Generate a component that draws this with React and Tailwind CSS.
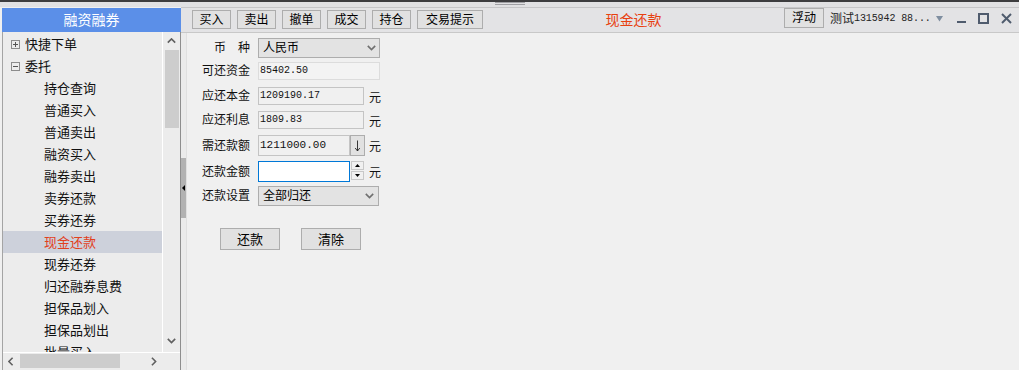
import React from "react";

const Btn = ({ children, className = "" }) => (
  <div
    className={
      "flex items-center justify-center bg-[#e1e1e1] border border-[#adadad] text-[12px] leading-none text-black box-border " +
      className
    }
  >
    {children}
  </div>
);

const Chevron = ({ dir = "down", className = "", color = "#606060" }) => {
  const pts = {
    up: "0.8,4.6 4.5,0.9 8.2,4.6",
    down: "0.8,0.9 4.5,4.6 8.2,0.9",
  };
  return (
    <svg width="9" height="6" viewBox="0 0 9 6" className={className}>
      <polyline points={pts[dir]} fill="none" stroke={color} strokeWidth="1.6" />
    </svg>
  );
};

const HChevron = ({ dir = "left", className = "" }) => {
  const pts = dir === "left" ? "4.6,0.8 0.9,4.5 4.6,8.2" : "0.9,0.8 4.6,4.5 0.9,8.2";
  return (
    <svg width="6" height="9" viewBox="0 0 6 9" className={className}>
      <polyline points={pts} fill="none" stroke="#606060" strokeWidth="1.6" />
    </svg>
  );
};

const TreeBox = ({ plus }) => (
  <svg width="9" height="9" viewBox="0 0 9 9" className="shrink-0">
    <rect x="0.5" y="0.5" width="8" height="8" fill="none" stroke="#8c8c8c" />
    <line x1="2" y1="4.5" x2="7" y2="4.5" stroke="#555" />
    {plus && <line x1="4.5" y1="2" x2="4.5" y2="7" stroke="#555" />}
  </svg>
);

const children = [
  "持仓查询",
  "普通买入",
  "普通卖出",
  "融资买入",
  "融券卖出",
  "卖券还款",
  "买券还券",
  "现金还款",
  "现券还券",
  "归还融券息费",
  "担保品划入",
  "担保品划出",
  "批量买入",
];

function LeftPanel() {
  return (
    <div className="w-[181px] shrink-0 flex flex-col">
      <div className="mt-[1px] ml-[2px] h-[24px] bg-[#5b8fe8] text-white text-[14px] leading-none flex items-center justify-center">
        融资融券
      </div>
      <div className="ml-[2px] flex-1 flex flex-col border-l border-[#a4a4a4] border-r border-r-[#8e8e8e] bg-[#ececec] min-h-0">
        <div className="h-[321px] flex border-b border-white">
          <div className="w-[160px] border-r border-white overflow-hidden pt-[1px]">
            <div className="h-[22px] flex items-center pl-[8px] text-[13px] leading-none text-[#111]">
              <TreeBox plus />
              <span className="ml-[5px]">快捷下单</span>
            </div>
            <div className="h-[22px] flex items-center pl-[8px] text-[13px] leading-none text-[#111]">
              <TreeBox />
              <span className="ml-[5px]">委托</span>
            </div>
            {children.map((c) => {
              const sel = c === "现金还款";
              return (
                <div
                  key={c}
                  className={
                    sel
                      ? "h-[22px] flex items-center pl-[41px] text-[13px] leading-none text-[#e2401c] bg-[#cdd1db]"
                      : "h-[22px] flex items-center pl-[41px] text-[13px] leading-none text-[#111]"
                  }
                >
                  {c}
                </div>
              );
            })}
          </div>
          <div className="w-[17px] flex flex-col items-center">
            <div className="h-[18px] flex items-center justify-center">
              <Chevron dir="up" />
            </div>
            <div className="w-[14px] h-[78px] bg-[#cdcdcd]" />
            <div className="flex-1" />
            <div className="h-[18px] flex items-center justify-center mb-[2px]">
              <Chevron dir="down" />
            </div>
          </div>
        </div>
        <div className="h-[16px] flex items-center">
          <div className="w-[160px] h-full flex items-center">
            <HChevron dir="left" className="ml-[5px]" />
            <div className="ml-[6px] w-[100px] h-[14px] bg-[#cdcdcd]" />
            <div className="flex-1" />
            <HChevron dir="right" className="mr-[6px]" />
          </div>
        </div>
      </div>
    </div>
  );
}

function Toolbar() {
  return (
    <div className="h-[26px] shrink-0 bg-[#e3e3e5] border-t border-[#c6c6c8] border-b border-b-[#c8c8c8] flex items-start pl-[11px] pr-[7px] box-border">
      <div className="flex gap-[6px] mt-[2px]">
        <Btn className="w-[39px] h-[19px]">买入</Btn>
        <Btn className="w-[39px] h-[19px]">卖出</Btn>
        <Btn className="w-[39px] h-[19px]">撤单</Btn>
        <Btn className="w-[39px] h-[19px]">成交</Btn>
        <Btn className="w-[39px] h-[19px]">持仓</Btn>
        <Btn className="w-[66px] h-[19px]">交易提示</Btn>
      </div>
      <div className="flex-1 h-full flex items-center justify-center text-[14px] leading-none text-[#e8400f]">
        现金还款
      </div>
      <Btn className="w-[40px] h-[20px]">浮动</Btn>
      <div className="ml-[6px] w-[103px] h-[22px] flex items-center whitespace-nowrap text-[#222] leading-none">
        <span className="text-[12px]">测试</span>
        <span className="text-[10px] tracking-[-0.1px] font-['Liberation_Mono',monospace]">1315942 88...</span>
      </div>
      <svg width="7" height="6" viewBox="0 0 7 6" className="ml-[3px] mt-[8px]">
        <polygon points="0,0 7,0 3.5,5.5" fill="#7f8ea0" />
      </svg>
      <div className="ml-[14px] mt-[13px] w-[9px] h-[2px] bg-[#4f5b6d]" />
      <div className="ml-[12px] mt-[5px] w-[11px] h-[11px] border-2 border-[#4f5b6d] box-border" />
      <svg width="11" height="11" viewBox="0 0 11 11" className="ml-[12px] mt-[5px]">
        <line x1="1" y1="1" x2="10" y2="10" stroke="#4f5b6d" strokeWidth="2" />
        <line x1="10" y1="1" x2="1" y2="10" stroke="#4f5b6d" strokeWidth="2" />
      </svg>
    </div>
  );
}

const Label = ({ children }) => (
  <div className="w-[48px] text-right text-[12px] leading-none text-[#111] whitespace-pre">{children}</div>
);

const Yuan = ({ className = "" }) => (
  <div className={"text-[12px] leading-none text-[#111] mt-[3px] " + className}>元</div>
);

const RO = ({ children, className = "" }) => (
  <div
    className={
      "h-full flex items-center pl-[1px] box-border border text-[10px] leading-none text-[#111] font-['Liberation_Mono',monospace] " +
      className
    }
  >
    {children}
  </div>
);

function Form() {
  return (
    <div className="flex-1 flex flex-col pl-[15px] pt-[5px]">
      <div className="h-[20px] flex items-center">
        <Label>{"币　种"}</Label>
        <div className="ml-[8px] w-[122px] h-full bg-[#e3e3e3] border border-[#adadad] box-border flex items-center pl-[4px] pr-[3px]">
          <span className="text-[12px] leading-none text-black flex-1">人民币</span>
          <Chevron dir="down" color="#707070" />
        </div>
      </div>
      <div className="mt-[4px] h-[18px] flex items-center">
        <Label>可还资金</Label>
        <RO className="ml-[8px] w-[122px] bg-[#f3f3f3] border-[#dcdcdc]">85402.50</RO>
      </div>
      <div className="mt-[7px] h-[18px] flex items-center">
        <Label>应还本金</Label>
        <RO className="ml-[8px] w-[106px] bg-[#f0f0f0] border-[#c4c4c4]">1209190.17</RO>
        <Yuan className="ml-[5px]" />
      </div>
      <div className="mt-[6px] h-[18px] flex items-center">
        <Label>应还利息</Label>
        <RO className="ml-[8px] w-[106px] bg-[#f0f0f0] border-[#c4c4c4]">1809.83</RO>
        <Yuan className="ml-[5px]" />
      </div>
      <div className="mt-[6px] h-[21px] flex items-center">
        <Label>需还款额</Label>
        <RO className="ml-[8px] w-[92px] bg-[#f0f0f0] border-[#c4c4c4] text-[11px]">1211000.00</RO>
        <div className="w-[15px] h-full bg-[#e1e1e1] border border-[#adadad] box-border flex items-center justify-center">
          <svg width="7" height="12" viewBox="0 0 7 12">
            <line x1="3.5" y1="0.5" x2="3.5" y2="11" stroke="#222" strokeWidth="0.9" />
            <polyline points="1.2,8 3.5,11 5.8,8" fill="none" stroke="#222" strokeWidth="0.9" />
          </svg>
        </div>
        <Yuan className="ml-[4px]" />
      </div>
      <div className="mt-[5px] h-[21px] flex items-center">
        <Label>还款金额</Label>
        <div className="ml-[8px] w-[92px] h-full bg-white border border-[#0078d7] box-border" />
        <div className="w-[15px] h-full flex flex-col items-center justify-between py-[0px]">
          <div className="w-[13px] h-[9px] bg-[#f0f0f0] border border-[#c8c8c8] box-border flex items-center justify-center">
            <svg width="5" height="3" viewBox="0 0 5 3">
              <polygon points="0,3 5,3 2.5,0" fill="#000" />
            </svg>
          </div>
          <div className="w-[13px] h-[9px] mb-[2px] bg-[#f0f0f0] border border-[#c8c8c8] box-border flex items-center justify-center">
            <svg width="5" height="3" viewBox="0 0 5 3">
              <polygon points="0,0 5,0 2.5,3" fill="#000" />
            </svg>
          </div>
        </div>
        <Yuan className="ml-[4px]" />
      </div>
      <div className="mt-[4px] h-[20px] flex items-center">
        <Label>还款设置</Label>
        <div className="ml-[8px] w-[121px] h-full bg-[#e3e3e3] border border-[#adadad] box-border flex items-center pl-[4px] pr-[4px]">
          <span className="text-[12px] leading-none text-black flex-1">全部归还</span>
          <Chevron dir="down" color="#707070" />
        </div>
      </div>
      <div className="mt-[22px] flex pl-[18px]">
        <Btn className="w-[60px] h-[22px] text-[13px]">还款</Btn>
        <Btn className="ml-[21px] w-[60px] h-[22px] text-[13px]">清除</Btn>
      </div>
    </div>
  );
}

export default function App() {
  return (
    <div className="w-[1019px] h-[370px] overflow-hidden bg-[#f0f0f0] flex flex-col font-['Liberation_Sans','Noto_Sans_CJK_SC',sans-serif]">
      <div className="h-[2px] shrink-0 bg-[#3d3d3f]" />
      <div className="h-[5px] shrink-0 bg-[#e1e1e3] flex justify-center">
        <div className="w-[30px] flex flex-col pt-[0px] gap-[1px]">
          <div className="h-[1px] bg-[#a0a0a4]" />
          <div className="h-[1px] bg-[#a0a0a4]" />
        </div>
      </div>
      <div className="flex flex-1 min-h-0">
        <LeftPanel />
        <div className="flex-1 flex flex-col">
          <Toolbar />
          <div className="flex flex-1">
            <div className="w-[5px] shrink-0 bg-[#ebebeb] flex flex-col">
              <div className="mt-[125px] h-[60px] bg-[#b2b2b2] flex items-center">
                <svg width="4" height="6" viewBox="0 0 4 6" className="ml-[1px]">
                  <polygon points="0,3 3,0 3,6" fill="#000" />
                </svg>
              </div>
            </div>
            <div className="flex-1 flex border-l border-[#e0e0e0]">
              <Form />
            </div>
          </div>
        </div>
      </div>
    </div>
  );
}
